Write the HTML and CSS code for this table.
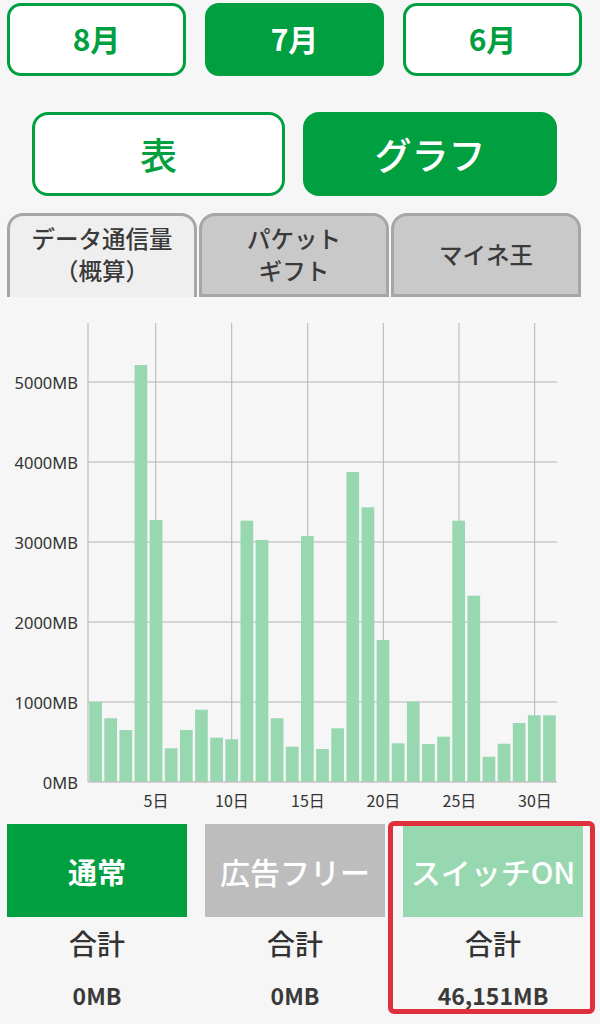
FILE: index.html
```html
<!DOCTYPE html>
<html lang="ja">
<head>
<meta charset="utf-8">
<title>データ通信量</title>
<link rel="stylesheet" href="styles.css">
</head>
<body>
<div class="page">
  <div class="months">
    <div class="month">8月</div>
    <div class="month active">7月</div>
    <div class="month">6月</div>
  </div>

  <div class="views">
    <div class="view">表</div>
    <div class="view active">グラフ</div>
  </div>

  <div class="tabs">
    <div class="tab active">データ通信量<br>（概算）</div>
    <div class="tab">パケット<br>ギフト</div>
    <div class="tab">マイネ王</div>
  </div>

  <svg class="chart" width="600" height="527" viewBox="0 0 600 527">
    <g class="grid">
      <line x1="88" y1="85" x2="557" y2="85"/>
      <line x1="88" y1="165" x2="557" y2="165"/>
      <line x1="88" y1="245" x2="557" y2="245"/>
      <line x1="88" y1="325" x2="557" y2="325"/>
      <line x1="88" y1="405" x2="557" y2="405"/>
      <line x1="88" y1="26" x2="88" y2="485"/>
      <line x1="155.7" y1="26" x2="155.7" y2="485"/>
      <line x1="231.7" y1="26" x2="231.7" y2="485"/>
      <line x1="307.7" y1="26" x2="307.7" y2="485"/>
      <line x1="383.3" y1="26" x2="383.3" y2="485"/>
      <line x1="459" y1="26" x2="459" y2="485"/>
      <line x1="534.7" y1="26" x2="534.7" y2="485"/>
    </g>
    <g class="bars">
      <rect x="89.2" y="405" width="12.7" height="80"/>
      <rect x="104.33" y="421.3" width="12.7" height="63.7"/>
      <rect x="119.46" y="433" width="12.7" height="52"/>
      <rect x="134.59" y="68" width="12.7" height="417"/>
      <rect x="149.72" y="223" width="12.7" height="262"/>
      <rect x="164.85" y="451.3" width="12.7" height="33.7"/>
      <rect x="179.98" y="433" width="12.7" height="52"/>
      <rect x="195.11" y="412.7" width="12.7" height="72.3"/>
      <rect x="210.24" y="440.7" width="12.7" height="44.3"/>
      <rect x="225.37" y="442.3" width="12.7" height="42.7"/>
      <rect x="240.5" y="223.7" width="12.7" height="261.3"/>
      <rect x="255.63" y="243" width="12.7" height="242"/>
      <rect x="270.76" y="421.3" width="12.7" height="63.7"/>
      <rect x="285.89" y="449.7" width="12.7" height="35.3"/>
      <rect x="301.02" y="239" width="12.7" height="246"/>
      <rect x="316.15" y="452" width="12.7" height="33"/>
      <rect x="331.28" y="431.3" width="12.7" height="53.7"/>
      <rect x="346.41" y="175" width="12.7" height="310"/>
      <rect x="361.54" y="210.3" width="12.7" height="274.7"/>
      <rect x="376.67" y="343" width="12.7" height="142"/>
      <rect x="391.8" y="446.3" width="12.7" height="38.7"/>
      <rect x="406.93" y="404.7" width="12.7" height="80.3"/>
      <rect x="422.06" y="447" width="12.7" height="38"/>
      <rect x="437.19" y="439.7" width="12.7" height="45.3"/>
      <rect x="452.32" y="223.7" width="12.7" height="261.3"/>
      <rect x="467.45" y="298.7" width="12.7" height="186.3"/>
      <rect x="482.58" y="459.7" width="12.7" height="25.3"/>
      <rect x="497.71" y="446.7" width="12.7" height="38.3"/>
      <rect x="512.84" y="426" width="12.7" height="59"/>
      <rect x="527.97" y="418.3" width="12.7" height="66.7"/>
      <rect x="543.1" y="418.3" width="12.7" height="66.7"/>
    </g>
    <line class="baseline" x1="88" y1="485" x2="557" y2="485"/>
    <g class="ylabels">
      <text x="78" y="85">5000MB</text>
      <text x="78" y="165">4000MB</text>
      <text x="78" y="245">3000MB</text>
      <text x="78" y="325">2000MB</text>
      <text x="78" y="405">1000MB</text>
      <text x="78" y="485">0MB</text>
    </g>
    <g class="xlabels">
      <text x="156" y="503">5日</text>
      <text x="232" y="503">10日</text>
      <text x="308" y="503">15日</text>
      <text x="383.5" y="503">20日</text>
      <text x="459.5" y="503">25日</text>
      <text x="535" y="503">30日</text>
    </g>
  </svg>

  <div class="totals">
    <div class="total">
      <div class="kind normal">通常</div>
      <div class="sum-label">合計</div>
      <div class="sum-value">0MB</div>
    </div>
    <div class="total">
      <div class="kind adfree">広告フリー</div>
      <div class="sum-label">合計</div>
      <div class="sum-value">0MB</div>
    </div>
    <div class="total highlighted">
      <div class="kind switch">スイッチON</div>
      <div class="sum-label">合計</div>
      <div class="sum-value">46,151MB</div>
      <div class="marker"></div>
    </div>
  </div>
</div>
</body>
</html>
```

FILE: styles.css
```css
html, body {
  margin: 0;
  padding: 0;
  background: #f6f6f6;
}

body {
  font-family: "Noto Sans CJK JP", "Noto Sans", Roboto, sans-serif;
  color: #333;
}

.page {
  width: 600px;
  height: 1024px;
  overflow: hidden;
}

/* Month selector */
.months {
  display: flex;
  gap: 19px;
  padding: 3px 0 0 7px;
}

.month {
  box-sizing: border-box;
  width: 179px;
  height: 73px;
  border: 3px solid #00a040;
  border-radius: 14px;
  background: #ffffff;
  color: #00a040;
  font-size: 30px;
  font-weight: 700;
  display: flex;
  align-items: center;
  justify-content: center;
  padding-bottom: 4px;
}

.month.active {
  background: #00a040;
  color: #ffffff;
}

/* Table / graph toggle */
.views {
  display: flex;
  gap: 18px;
  padding-left: 32px;
  margin-top: 36px;
}

.view {
  box-sizing: border-box;
  width: 253px;
  height: 84px;
  border: 3px solid #00a040;
  border-radius: 16px;
  background: #ffffff;
  color: #00a040;
  font-size: 37px;
  font-weight: 500;
  display: flex;
  align-items: center;
  justify-content: center;
}

.view.active {
  width: 254px;
  background: #00a040;
  color: #ffffff;
}

/* Tabs */
.tabs {
  display: flex;
  gap: 2px;
  padding-left: 7px;
  margin-top: 17px;
}

.tab {
  box-sizing: border-box;
  width: 190px;
  height: 84px;
  border: 3px solid #a6a6a6;
  border-radius: 16px 16px 0 0;
  background: #c9c9c9;
  color: #3a3a3a;
  font-size: 23.5px;
  font-weight: 500;
  line-height: 32px;
  text-align: center;
  display: flex;
  align-items: center;
  justify-content: center;
  padding-bottom: 2px;
}

.tab.active {
  background: #efefef;
  border-bottom: none;
  padding-bottom: 5px;
}

/* Chart */
.chart {
  display: block;
}

.grid line {
  stroke: #b4b4b4;
  stroke-width: 1;
}

.baseline {
  stroke: #c4c4c4;
  stroke-width: 1.5;
}

.bars rect {
  fill: #98d8b0;
}

.ylabels text {
  font-family: "Noto Sans", "Noto Sans CJK JP", sans-serif;
  font-size: 16.5px;
  fill: #333;
  text-anchor: end;
  dominant-baseline: central;
}

.xlabels text {
  font-family: "Noto Sans CJK JP", "Noto Sans", sans-serif;
  font-size: 16px;
  fill: #333;
  text-anchor: middle;
  dominant-baseline: central;
}

/* Totals */
.totals {
  display: flex;
  gap: 18px;
  padding-left: 7px;
}

.total {
  position: relative;
  width: 180px;
  text-align: center;
}

.kind {
  height: 93px;
  display: flex;
  align-items: center;
  justify-content: center;
  color: #ffffff;
  font-size: 29px;
  font-weight: 700;
  white-space: nowrap;
}

.kind.normal {
  background: #00a040;
}

.kind.adfree {
  background: #bdbdbd;
  font-size: 30px;
  font-weight: 500;
}

.kind.switch {
  background: #98d8b0;
  font-size: 30px;
  font-weight: 500;
}

.sum-label {
  height: 52px;
  line-height: 52px;
  font-size: 28px;
  font-weight: 500;
  color: #333;
}

.sum-value {
  height: 52px;
  line-height: 52px;
  font-size: 23px;
  font-weight: 700;
  color: #3a3a3a;
}

.marker {
  position: absolute;
  box-sizing: border-box;
  left: -15px;
  top: -3px;
  width: 207px;
  height: 193px;
  border: 5px solid #e0303e;
  border-radius: 6px;
}
```
